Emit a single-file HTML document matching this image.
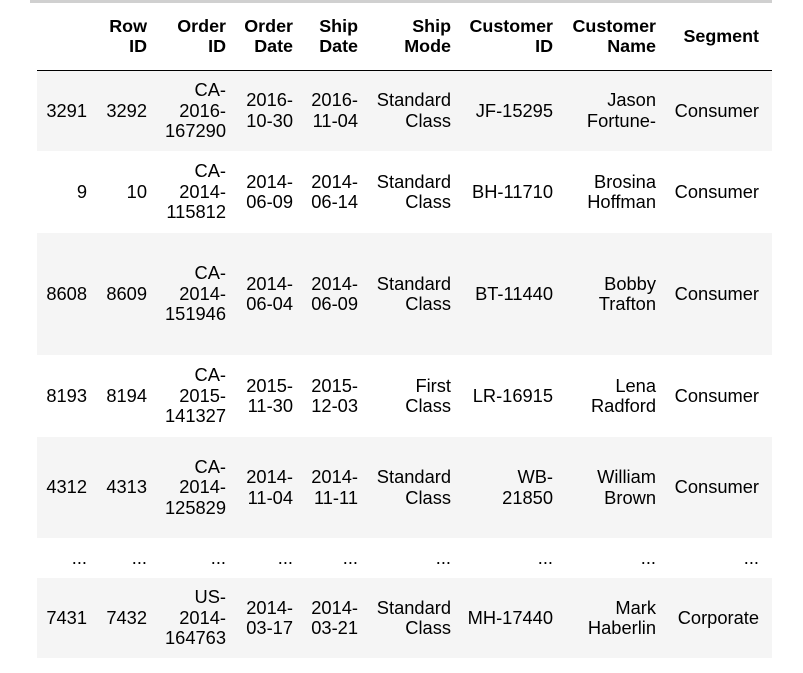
<!DOCTYPE html>
<html><head><meta charset="utf-8"><style>
body{margin:0;background:#fff;width:803px;height:673px;overflow:hidden;font-family:"Liberation Sans",Arial,sans-serif;color:#000}
.bar{position:absolute;left:30px;top:0;width:742px;height:3px;background:#d0d0d0}
table{position:absolute;left:37px;top:3px;border-collapse:collapse;table-layout:fixed;font-size:18.3px;line-height:20.5px}
td,th{text-align:right;padding:0 13px 0 0;vertical-align:middle;white-space:nowrap}
th{font-weight:bold;font-size:17.9px}
thead tr{height:67px}
thead th{border-bottom:1px solid #000}
.g{background:#f5f5f5}
</style></head><body>
<div class="bar"></div>
<table>
<colgroup><col style="width:63px"><col style="width:60px"><col style="width:79px"><col style="width:67px"><col style="width:65px"><col style="width:93px"><col style="width:102px"><col style="width:103px"><col style="width:103px"></colgroup>
<thead><tr><th></th><th>Row<br>ID</th><th>Order<br>ID</th><th>Order<br>Date</th><th>Ship<br>Date</th><th>Ship<br>Mode</th><th>Customer<br>ID</th><th>Customer<br>Name</th><th>Segment</th></tr></thead>
<tbody>
<tr class="g" style="height:81px"><td>3291</td><td>3292</td><td>CA-<br>2016-<br>167290</td><td>2016-<br>10-30</td><td>2016-<br>11-04</td><td>Standard<br>Class</td><td>JF-15295</td><td>Jason<br>Fortune-</td><td>Consumer</td></tr>
<tr style="height:82px"><td>9</td><td>10</td><td>CA-<br>2014-<br>115812</td><td>2014-<br>06-09</td><td>2014-<br>06-14</td><td>Standard<br>Class</td><td>BH-11710</td><td>Brosina<br>Hoffman</td><td>Consumer</td></tr>
<tr class="g" style="height:122px"><td>8608</td><td>8609</td><td>CA-<br>2014-<br>151946</td><td>2014-<br>06-04</td><td>2014-<br>06-09</td><td>Standard<br>Class</td><td>BT-11440</td><td>Bobby<br>Trafton</td><td>Consumer</td></tr>
<tr style="height:82px"><td>8193</td><td>8194</td><td>CA-<br>2015-<br>141327</td><td>2015-<br>11-30</td><td>2015-<br>12-03</td><td>First<br>Class</td><td>LR-16915</td><td>Lena<br>Radford</td><td>Consumer</td></tr>
<tr class="g" style="height:101px"><td>4312</td><td>4313</td><td>CA-<br>2014-<br>125829</td><td>2014-<br>11-04</td><td>2014-<br>11-11</td><td>Standard<br>Class</td><td>WB-<br>21850</td><td>William<br>Brown</td><td>Consumer</td></tr>
<tr style="height:40px"><td>...</td><td>...</td><td>...</td><td>...</td><td>...</td><td>...</td><td>...</td><td>...</td><td>...</td></tr>
<tr class="g" style="height:80px"><td>7431</td><td>7432</td><td>US-<br>2014-<br>164763</td><td>2014-<br>03-17</td><td>2014-<br>03-21</td><td>Standard<br>Class</td><td>MH-17440</td><td>Mark<br>Haberlin</td><td>Corporate</td></tr>
</tbody></table>
</body></html>
